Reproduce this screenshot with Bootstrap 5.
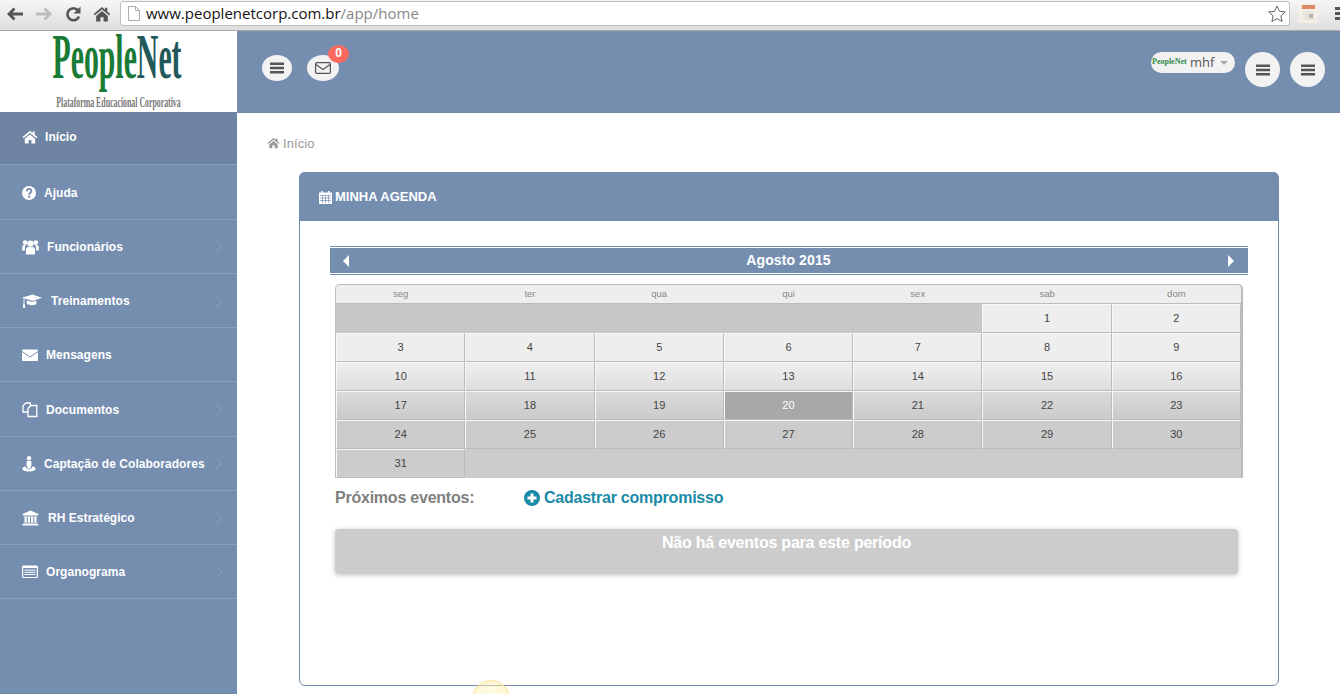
<!DOCTYPE html>
<html lang="pt-BR">
<head>
<meta charset="UTF-8">
<title>PeopleNet</title>
<link href="https://cdn.jsdelivr.net/npm/bootstrap@5.3.0/dist/css/bootstrap.min.css" rel="stylesheet">
<style>
    html, body { height: 694px; overflow: hidden; }
    body { font-family: "Liberation Sans", Arial, sans-serif; background: #fff; color: #333; position: relative; }

    /* barra do navegador */
    .chrome-bar { height: 31px; background: linear-gradient(#f6f6f6, #dedede); border-bottom: 1px solid #a9a9a9; padding: 1px 0 0 6px; position: relative; z-index: 1; }
    .chrome-btn { width: 18px; height: 18px; margin-top: 4px; flex: none; }
    .chrome-btn + .chrome-btn { margin-left: 11px; }
    .url-box { height: 25px; margin-left: 9px; width: 1170px; flex: none; background: #fff; border: 1px solid #bcbcbc; border-radius: 3px; padding: 0 3px 0 7px; font-family: "Open Sans", sans-serif; font-size: 15px; line-height: 23px; color: #111; }
    .url-path { color: #888; }
    .url-text { margin-left: 6px; }
    .ext-ico { margin: 3px 0 0 9px; flex: none; }
    .chrome-menu { width: 5px; height: 13px; margin: 6px 0 0 auto; flex: none; background: repeating-linear-gradient(#555 0 3px, transparent 3px 5px); }

    /* logo */
    .side-col { width: 237px; flex: none; background: #758eb0; }
    .logo-box { height: 81px; background: #fff; position: relative; }
    .logo-name { font-family: "Liberation Serif", serif; font-weight: 700; font-size: 63px; line-height: 52px; height: 58px; display: flex; justify-content: center; transform: scaleX(.473); color: #1a7b36; white-space: nowrap; margin-left: -3px; }
    .logo-name span { color: #22595b; }
    .logo-sub { font-family: "Liberation Serif", serif; font-weight: 700; font-size: 14.5px; line-height: 14px; color: #777; white-space: nowrap; display: flex; justify-content: center; transform: scaleX(.54); margin-top: 6px; }

    /* menu lateral */
    .menu-item { height: 54.23px; display: flex; align-items: center; padding: 1px 15px 0 22px; border-bottom: 1px solid #85a0c2; color: #fff; font-size: 12px; font-weight: 700; text-decoration: none; letter-spacing: .05px; }
    .menu-item.is-active { background: #6f84a2; height: 53px; margin-bottom: .6px; padding: 0 15px 2px 22px; }
    .menu-ico { width: 16px; height: 16px; flex: none; margin-right: 8px; }
    .mi-home { margin-right: 7px; color: #fff; }
    .mi-help { margin-right: 6px; }
    .mi-users { width: 17px; }
    .mi-cap { width: 20px; margin-right: 9px; }
    .mi-pin { width: 14px; }
    .mi-bank { width: 17px; margin-right: 9px; }
    .menu-chev { width: 6px; height: 11px; margin-left: auto; flex: none; }

    /* topo */
    .top-bar { height: 82px; background: #758eb0; padding: 24px 15px 0 25px; position: relative; }
    .pill-btn { width: 30px; height: 26px; border-radius: 50%; background: #f2f2f2; display: flex; align-items: center; justify-content: center; border: 0; padding: 0; position: relative; }
    .pill-wide { width: 32px; margin-left: 15px; }
    .msg-count { position: absolute; top: -10px; right: -10px; width: 21px; height: 18px; border-radius: 50%; background: #fb6a5f; color: #fff; font-size: 12px; font-weight: 700; line-height: 17px; text-align: center; }
    .user-pill { width: 84px; height: 21px; background: #f2f2f2; border-radius: 11px; margin-top: -3px; color: #555; font-family: "Open Sans", sans-serif; font-size: 13px; line-height: 20px; padding-left: 1px; white-space: nowrap; }
    .user-logo { display: inline-block; width: 37px; font-family: "Liberation Serif", serif; font-weight: 700; font-size: 8px; color: #2e8b46; overflow: hidden; vertical-align: top; margin-right: 1px; }
    .user-caret { display: inline-block; width: 0; height: 0; border: 4px solid transparent; border-top-color: #aaa; border-bottom: 0; margin-left: 6px; vertical-align: 2px; }
    .round-btn { width: 35px; height: 35px; border-radius: 50%; background: #f2f2f2; display: flex; align-items: center; justify-content: center; border: 0; padding: 0; margin-left: 10px; margin-top: -3px; }

    /* conteudo */
    .crumb-line { padding: 22px 0 0 30px; height: 59px; color: #999; font-size: 13px; line-height: 18px; letter-spacing: .1px; }
    .crumb-ico { margin-right: 3px; }
    .agenda-card { margin: 0 61px 0 62px; height: 514px; border: 1px solid #758eb0; border-radius: 6px; }
    .agenda-head { height: 49px; margin: -1px -1px 0; background: #758eb0; border-radius: 6px 6px 0 0; color: #fff; font-size: 13px; font-weight: 700; padding: 0 20px; display: flex; align-items: center; gap: 3px; }
    .agenda-body { padding: 25px 30px 0 30px; }
    .cal-title { height: 29px; border-top: 1px solid #758eb0; border-bottom: 1px solid #758eb0; padding: 1px 0; }
    .cal-title-in { height: 25px; background: #758eb0; color: #fff; font-size: 14px; font-weight: 700; letter-spacing: .1px; padding: 0 14px 0 13px; }
    .cal-arrow { width: 6px; height: 12px; }
    .cal-grid { width: 908px; margin: 9px 0 0 5px; table-layout: fixed; border-collapse: separate; border-spacing: 0; font-size: 11px; background: #ccc; border: 1px solid #bbb; border-right-width: 2px; border-bottom: 0; border-radius: 5px 5px 0 0; color: #444; }
    .cal-grid th { height: 19px; background: #eee; border-bottom: 1px solid #bbb; font-size: 9.5px; font-weight: 400; color: #888; text-align: center; padding: 0; }
    .cal-grid th:first-child { border-top-left-radius: 4px; }
    .cal-grid th:last-child { border-top-right-radius: 4px; }
    .cal-grid td { height: 29px; text-align: center; padding: 0; border-top: 1px solid #f8f8f8; border-left: 1px solid #f8f8f8; border-right: 1px solid #bbb; border-bottom: 1px solid #bbb; }
    .cal-grid td.no-day { background: #c8c8c8; border-color: #c8c8c8; }
    .cal-grid td.no-day-end { background: #ccc; border-color: #ccc; }
    .week-1 td { background: #eee; }
    .week-3 td { background: linear-gradient(#efefef, #dedede); }
    .week-4 td { background: linear-gradient(#dadada, #cbcbcb); }
    .week-5 td { background: #ccc; }
    .cal-grid td.is-today { background: #a8a8a8; color: #fff; }
    .next-line { padding: 8px 0 0 5px; height: 51px; font-size: 16px; letter-spacing: -.23px; font-weight: 700; color: #807f7f; }
    .next-label { width: 189px; }
    .new-link { color: #1a8aa8; text-decoration: none; display: flex; align-items: center; gap: 4px; }
    .empty-box { margin: 0 10px 0 5px; height: 45px; border-radius: 4px; background: #ccc; box-shadow: 0 1px 5px rgba(0,0,0,.25); color: #fff; font-size: 16px; letter-spacing: -.22px; font-weight: 700; line-height: 28px; text-align: center; }

    /* destaque do cursor */
    .cursor-glow { position: absolute; left: 472px; top: 680px; width: 38px; height: 38px; border-radius: 50%; background: radial-gradient(rgba(255,244,190,.45) 40%, rgba(255,232,140,.5) 85%); border: 1px solid #fde39a; }
</style>
</head>
<body>
<svg width="0" height="0" class="d-block position-absolute">
    <symbol id="i-home" viewBox="0 0 16 16"><path fill="currentColor" d="M8 1.800 .6 8l1 1.200L8 3.900l6.400 5.300 1-1.200-2.700-2.300V2.400h-2v1.800zM2.800 9.700V14.600h3.800v-3.700h2.800v3.700h3.800V9.700L8 5.400z"/></symbol>
    <symbol id="i-bars" viewBox="0 0 16 16"><path fill="currentColor" d="M1 2.500h14v2.600H1zM1 6.700h14v2.600H1zM1 10.900h14v2.600H1z"/></symbol>
    <symbol id="i-mail" viewBox="0 0 16 14"><rect x=".6" y="1.600" width="14.800" height="10.800" rx="1.200" fill="none" stroke="currentColor" stroke-width="1.200"/><path d="M1 3.400 8 8.600l7-5.200" fill="none" stroke="currentColor" stroke-width="1.200"/></symbol>
    <symbol id="i-help" viewBox="0 0 16 16"><circle cx="7" cy="8" r="7" fill="#fff"/><path d="M4.800 6.200c.2-3 4.700-3 4.600-.2 0 1.800-2.200 1.800-2.200 3.700" fill="none" stroke="#758eb0" stroke-width="1.900"/><rect x="6.200" y="10.600" width="2" height="2" fill="#758eb0"/></symbol>
    <symbol id="i-users" viewBox="0 0 17 16"><g fill="#fff"><circle cx="3.200" cy="3.600" r="2.400"/><circle cx="13.800" cy="3.600" r="2.400"/><circle cx="8.500" cy="4.600" r="3.200"/><path d="M.2 11.500V8c0-1.300 1-2 2.200-2h1.300c-.5.800-.8 2.800-.8 3.900v1.600zM16.800 11.500V8c0-1.300-1-2-2.200-2h-1.300c.5.800.8 2.800.8 3.900v1.600z"/><path d="M4 15.500V10.600c0-1.600 1-2.600 2.400-2.600h4.200c1.400 0 2.400 1 2.400 2.600v4.900z"/></g></symbol>
    <symbol id="i-cap" viewBox="0 0 20 16"><g fill="#fff"><path d="M10.500 1.500 20 4.800 10.500 8 0 4.800z"/><path d="M4.800 7.600v3.400c1.500 1.600 8 1.600 9.500 0V7.600l-3.800 1.400z"/><rect x="1.500" y="5.500" width="1" height="7.500"/><rect x="1" y="11.500" width="2" height="3.500"/></g></symbol>
    <symbol id="i-env" viewBox="0 0 16 14"><rect y="1.500" width="16" height="11.500" rx=".8" fill="#fff"/><path d="M0 3.500 8 9l8-5.500" fill="none" stroke="#758eb0" stroke-width="1"/></symbol>
    <symbol id="i-docs" viewBox="0 0 16 16"><g fill="#758eb0" stroke="#fff" stroke-width="1.300"><path d="M1 3.800 3.800 1h4.500v9H1z"/><path d="M6 6.500 9 3.500h5.800V14.500H6z"/></g></symbol>
    <symbol id="i-pin" viewBox="0 0 14 16"><g fill="#fff"><circle cx="7" cy="2.200" r="2.200"/><path d="M4.600 5h4.800v5H8.800v2.500H5.200V10H4.600z"/><path d="M3.800 10.300v.8C3.800 12.200 5 13.200 7 13.200s3.200-1 3.200-2.100v-.8c2 .4 3.500 1.300 3.500 2.500 0 1.700-3 2.700-6.700 2.700S.3 14.500.3 12.800c0-1.200 1.500-2.100 3.500-2.500z"/></g></symbol>
    <symbol id="i-bank" viewBox="0 0 17 16"><g fill="#fff"><path d="M8.500 .5 16.500 4v1H.5V4z"/><rect x="1.500" y="5.500" width="14" height="1"/><rect x="2.500" y="7" width="2.200" height="5"/><rect x="5.800" y="7" width="2.200" height="5"/><rect x="9" y="7" width="2.200" height="5"/><rect x="12.300" y="7" width="2.200" height="5"/><rect x="1.500" y="12.500" width="14" height="1"/><rect x=".5" y="14" width="16" height="1.500"/></g></symbol>
    <symbol id="i-list" viewBox="0 0 16 14"><rect x=".6" y="1" width="14.800" height="11.500" rx="1" fill="none" stroke="#fff" stroke-width="1.200"/><rect x=".6" y="1" width="14.800" height="2" fill="#fff"/><path d="M2.500 5.100h11M2.500 7.300h11M2.500 9.500h11" stroke="#fff" stroke-width="1"/></symbol>
    <symbol id="i-chev" viewBox="0 0 6 11"><path d="M.5.500 5.500 5.500.5 10.500" fill="none" stroke="#8ba3c2" stroke-width="1"/></symbol>
</svg>

<div class="chrome-bar d-flex align-items-start">
    <svg class="chrome-btn" viewBox="0 0 18 18"><path d="M17 9H3M8.500 3.500 3 9l5.500 5.500" fill="none" stroke="#555" stroke-width="2.800"/></svg>
    <svg class="chrome-btn" viewBox="0 0 18 18"><path d="M1 9h14M9.500 3.500 15 9l-5.500 5.500" fill="none" stroke="#bbb" stroke-width="2.800"/></svg>
    <svg class="chrome-btn" viewBox="0 0 18 18"><path d="M15 11.500A6 6 0 1 1 14 5.300" fill="none" stroke="#555" stroke-width="2.600"/><path d="M16.500 1.500v7h-7z" fill="#555"/></svg>
    <svg class="chrome-btn" viewBox="0 0 16 16" color="#555"><use href="#i-home"/></svg>
    <div class="url-box d-flex align-items-center">
        <svg width="12" height="15" viewBox="0 0 12 15"><path d="M.5.500h7l4 4v10H.500z M7.500.500v4h4" fill="#fff" stroke="#aaa"/></svg>
        <span class="url-text">www.peoplenetcorp.com.br<span class="url-path">/app/home</span></span>
        <svg class="ms-auto" width="18" height="18" viewBox="0 0 18 18"><path d="m9 1 2.400 5.300 5.800.6-4.300 3.900 1.200 5.700L9 13.600l-5.100 2.900 1.200-5.700L.8 6.900l5.800-.6z" fill="#fff" stroke="#666"/></svg>
    </div>
    <svg class="ext-ico" width="19" height="19" viewBox="0 0 19 19"><rect width="19" height="19" fill="#f3efe6"/><rect x="3" y="1" width="13" height="4" fill="#d98a63"/><rect x="4" y="7" width="11" height="9" fill="#e9e5dc"/><rect x="10" y="10" width="4" height="4" fill="#b9b5ac"/></svg>
    <div class="chrome-menu"></div>
</div>

<div class="d-flex">
    <aside class="side-col vh-100">
        <div class="logo-box">
            <div class="logo-name"><b class="fw-bold">People</b><span>Net</span></div>
            <div class="logo-sub"><span>Plataforma Educacional Corporativa</span></div>
        </div>
        <nav>
            <a class="menu-item is-active" href="#"><svg class="menu-ico mi-home"><use href="#i-home"/></svg>Início</a>
            <a class="menu-item" href="#"><svg class="menu-ico mi-help"><use href="#i-help"/></svg>Ajuda</a>
            <a class="menu-item" href="#"><svg class="menu-ico mi-users"><use href="#i-users"/></svg>Funcionários<svg class="menu-chev"><use href="#i-chev"/></svg></a>
            <a class="menu-item" href="#"><svg class="menu-ico mi-cap"><use href="#i-cap"/></svg>Treinamentos<svg class="menu-chev"><use href="#i-chev"/></svg></a>
            <a class="menu-item" href="#"><svg class="menu-ico"><use href="#i-env"/></svg>Mensagens</a>
            <a class="menu-item" href="#"><svg class="menu-ico"><use href="#i-docs"/></svg>Documentos<svg class="menu-chev"><use href="#i-chev"/></svg></a>
            <a class="menu-item" href="#"><svg class="menu-ico mi-pin"><use href="#i-pin"/></svg>Captação de Colaboradores<svg class="menu-chev"><use href="#i-chev"/></svg></a>
            <a class="menu-item" href="#"><svg class="menu-ico mi-bank"><use href="#i-bank"/></svg>RH Estratégico<svg class="menu-chev"><use href="#i-chev"/></svg></a>
            <a class="menu-item" href="#"><svg class="menu-ico"><use href="#i-list"/></svg>Organograma<svg class="menu-chev"><use href="#i-chev"/></svg></a>
        </nav>
    </aside>

    <main class="flex-grow-1">
        <div class="top-bar d-flex align-items-start">
            <button class="pill-btn" type="button"><svg width="16" height="16" color="#555"><use href="#i-bars"/></svg></button>
            <button class="pill-btn pill-wide" type="button"><svg width="16" height="14" color="#555"><use href="#i-mail"/></svg><span class="msg-count">0</span></button>
            <div class="user-pill ms-auto"><span class="user-logo">PeopleNet</span>mhf<span class="user-caret"></span></div>
            <button class="round-btn" type="button"><svg width="16" height="16" color="#555"><use href="#i-bars"/></svg></button>
            <button class="round-btn" type="button"><svg width="16" height="16" color="#555"><use href="#i-bars"/></svg></button>
        </div>

        <div class="crumb-line d-flex align-items-start"><svg class="crumb-ico" width="13" height="16" viewBox="0 0 16 18" color="#999"><use href="#i-home"/></svg>Início</div>

        <section class="agenda-card">
            <div class="agenda-head">
                <svg width="13" height="14" viewBox="0 0 13 14"><path fill="#fff" d="M0 2.500h2.500V1h1.500v1.500h5V1h1.500v1.500H13V14H0z"/><path d="M1 5.500h11M1 8h11M1 10.500h11M3.500 5v8M6.500 5v8M9.500 5v8" stroke="#758eb0" stroke-width=".7"/></svg>
                MINHA AGENDA
            </div>
            <div class="agenda-body">
                <div class="cal-title">
                    <div class="cal-title-in d-flex align-items-center justify-content-between">
                        <svg class="cal-arrow"><path d="M6 0v12L0 6z" fill="#fff"/></svg>
                        <span>Agosto 2015</span>
                        <svg class="cal-arrow"><path d="M0 0v12l6-6z" fill="#fff"/></svg>
                    </div>
                </div>
                <table class="cal-grid">
                    <thead>
                        <tr><th>seg</th><th>ter</th><th>qua</th><th>qui</th><th>sex</th><th>sab</th><th>dom</th></tr>
                    </thead>
                    <tbody>
                        <tr class="week-1"><td class="no-day" colspan="5"></td><td>1</td><td>2</td></tr>
                        <tr class="week-1"><td>3</td><td>4</td><td>5</td><td>6</td><td>7</td><td>8</td><td>9</td></tr>
                        <tr class="week-3"><td>10</td><td>11</td><td>12</td><td>13</td><td>14</td><td>15</td><td>16</td></tr>
                        <tr class="week-4"><td>17</td><td>18</td><td>19</td><td class="is-today">20</td><td>21</td><td>22</td><td>23</td></tr>
                        <tr class="week-5"><td>24</td><td>25</td><td>26</td><td>27</td><td>28</td><td>29</td><td>30</td></tr>
                        <tr class="week-5"><td>31</td><td class="no-day-end" colspan="6"></td></tr>
                    </tbody>
                </table>
                <div class="next-line d-flex align-items-start">
                    <span class="next-label">Próximos eventos:</span>
                    <a class="new-link" href="#">
                        <svg width="16" height="16" viewBox="0 0 16 16"><circle cx="8" cy="8" r="8" fill="#1a8aa8"/><path d="M3.500 8h9M8 3.500v9" stroke="#fff" stroke-width="3"/></svg>
                        Cadastrar compromisso
                    </a>
                </div>
                <div class="empty-box">Não há eventos para este período</div>
            </div>
        </section>
    </main>
</div>
<div class="cursor-glow"></div>

<script src="https://cdn.jsdelivr.net/npm/bootstrap@5.3.0/dist/js/bootstrap.bundle.min.js"></script>
</body>
</html>
